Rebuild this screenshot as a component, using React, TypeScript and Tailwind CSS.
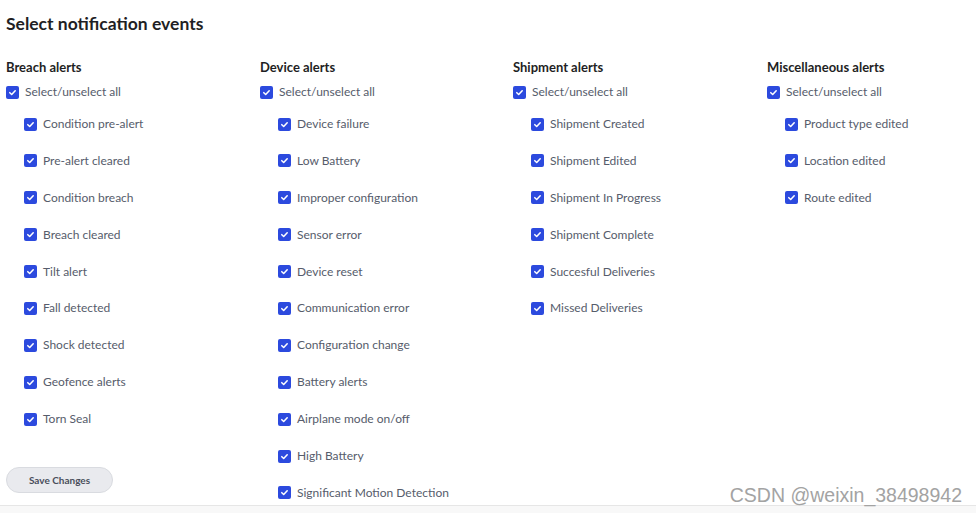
import React from 'react';

const groups: { title: string; items: string[] }[] = [
  {
    title: 'Breach alerts',
    items: [
      'Condition pre-alert',
      'Pre-alert cleared',
      'Condition breach',
      'Breach cleared',
      'Tilt alert',
      'Fall detected',
      'Shock detected',
      'Geofence alerts',
      'Torn Seal',
    ],
  },
  {
    title: 'Device alerts',
    items: [
      'Device failure',
      'Low Battery',
      'Improper configuration',
      'Sensor error',
      'Device reset',
      'Communication error',
      'Configuration change',
      'Battery alerts',
      'Airplane mode on/off',
      'High Battery',
      'Significant Motion Detection',
    ],
  },
  {
    title: 'Shipment alerts',
    items: [
      'Shipment Created',
      'Shipment Edited',
      'Shipment In Progress',
      'Shipment Complete',
      'Succesful Deliveries',
      'Missed Deliveries',
    ],
  },
  {
    title: 'Miscellaneous alerts',
    items: ['Product type edited', 'Location edited', 'Route edited'],
  },
];

function Box() {
  return (
    <span className="flex h-[13px] w-[13px] shrink-0 items-center justify-center rounded-[2px] bg-[#2c4ade]">
      <svg width="9" height="9" viewBox="0 0 10 10" fill="none">
        <path d="M2 5.2 L4.1 7.2 L8 3" stroke="white" strokeWidth="1.7" strokeLinecap="round" strokeLinejoin="round" />
      </svg>
    </span>
  );
}

function Row({ label }: { label: string }) {
  return (
    <div className="flex h-[20px] items-center gap-[6px]">
      <Box />
      <span className="text-[12px] text-[#565c6b]">{label}</span>
    </div>
  );
}

export default function App() {
  return (
    <div
      className="relative flex h-[513px] w-[976px] flex-col overflow-hidden bg-white"
      style={{ fontFamily: 'Lato, "Noto Sans", sans-serif' }}
    >
      <div className="flex-1 px-[6px] pt-[14px]">
        <h1 className="text-[17.5px] font-bold leading-[20px] text-[#1f1f24]">Select notification events</h1>
        <div className="mt-[25px] grid grid-cols-[254px_253px_254px_1fr]">
          {groups.map((g, gi) => (
            <div key={g.title} className="flex flex-col">
              <div className="text-[13px] font-bold leading-[16px] text-[#1f1f24]">{g.title}</div>
              <div className="mt-[7px]">
                <Row label="Select/unselect all" />
              </div>
              <div className="mt-[12px] flex flex-col gap-[16.9px] pl-[18px]">
                {g.items.map((it) => (
                  <Row key={it} label={it} />
                ))}
              </div>
              {gi === 0 && (
                <button className="mt-[38px] h-[26px] w-[107px] rounded-full border border-[#d9dbe0] bg-[#e9eaee] text-[10px] font-bold text-[#4a4f5c]">
                  Save Changes
                </button>
              )}
            </div>
          ))}
        </div>
      </div>
      <div className="h-[8px] border-t border-[#e6e6e6] bg-[#f8f8f8]" />
      <div
        className="absolute bottom-[7px] right-[14px] text-[19.5px] leading-[22px] text-[#a3a3a3]"
        style={{ fontFamily: '"Liberation Sans", Arial, sans-serif' }}
      >
        CSDN @weixin_38498942
      </div>
    </div>
  );
}
